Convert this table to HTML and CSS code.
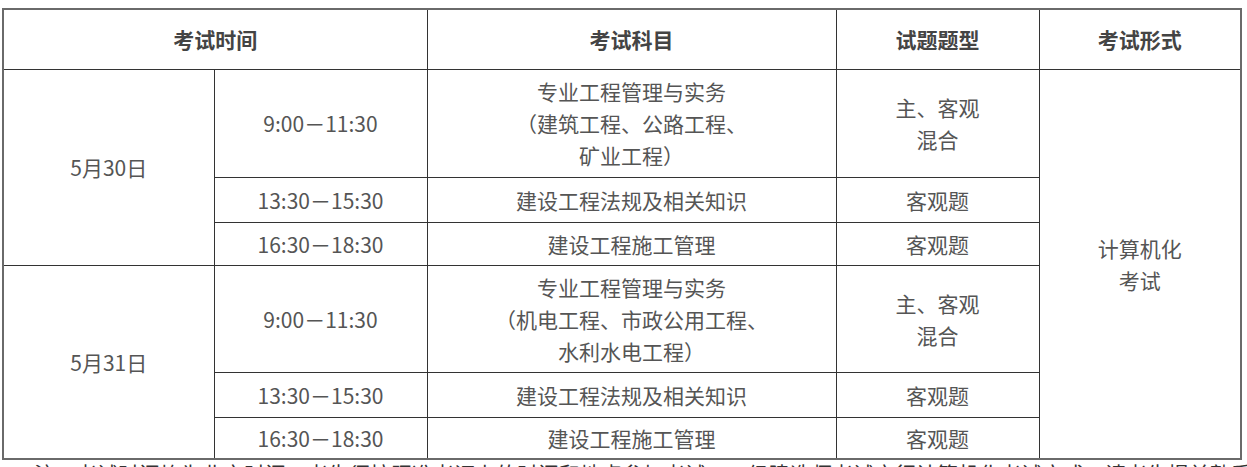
FILE: index.html
```html
<!DOCTYPE html>
<html lang="zh-CN">
<head>
<meta charset="utf-8">
<link rel="stylesheet" href="styles.css">
</head>
<body>
<div class="page">
<table class="exam">
  <colgroup>
    <col class="c1"><col class="c2"><col class="c3"><col class="c4"><col class="c5">
  </colgroup>
  <thead>
    <tr class="head">
      <th colspan="2">考试时间</th>
      <th>考试科目</th>
      <th>试题题型</th>
      <th>考试形式</th>
    </tr>
  </thead>
  <tbody>
    <tr class="tall">
      <td rowspan="3">5月30日</td>
      <td>9:00－11:30</td>
      <td>专业工程管理与实务<br>（建筑工程、公路工程、<br>矿业工程）</td>
      <td>主、客观<br>混合</td>
      <td rowspan="6">计算机化<br>考试</td>
    </tr>
    <tr class="short">
      <td>13:30－15:30</td>
      <td>建设工程法规及相关知识</td>
      <td>客观题</td>
    </tr>
    <tr class="short2">
      <td>16:30－18:30</td>
      <td>建设工程施工管理</td>
      <td>客观题</td>
    </tr>
    <tr class="tall2">
      <td rowspan="3">5月31日</td>
      <td>9:00－11:30</td>
      <td>专业工程管理与实务<br>（机电工程、市政公用工程、<br>水利水电工程）</td>
      <td>主、客观<br>混合</td>
    </tr>
    <tr class="short">
      <td>13:30－15:30</td>
      <td>建设工程法规及相关知识</td>
      <td>客观题</td>
    </tr>
    <tr class="short3">
      <td>16:30－18:30</td>
      <td>建设工程施工管理</td>
      <td>客观题</td>
    </tr>
  </tbody>
</table>
<p class="note">注：考试时间均为北京时间，考生须按照准考证上的时间和地点参加考试，一级建造师考试实行计算机化考试方式，请考生提前熟悉考试系统。</p>
</div>
</body>
</html>
```

FILE: styles.css
```css
html, body {
  margin: 0;
  padding: 0;
  background: #ffffff;
}
.page {
  padding: 8px 0 0 2px;
  height: 459px;
  overflow: hidden;
  font-family: "Noto Sans CJK SC", "Noto Sans", sans-serif;
}
.exam {
  border-collapse: collapse;
  table-layout: fixed;
  width: 1238px;
  border: 2px solid #6a6a6a;
  color: #555;
  font-size: 21px;
}
.c1 { width: 211px; }
.c2 { width: 213px; }
.c3 { width: 409px; }
.c4 { width: 203px; }
.c5 { width: 202px; }
.exam th, .exam td {
  border: 1px solid #333;
  text-align: center;
  vertical-align: middle;
  padding: 0;
  line-height: 32px;
  font-weight: normal;
}
.exam th {
  font-weight: bold;
  color: #444;
}
.head { height: 60px; }
.tall { height: 108px; }
.tall2 { height: 107px; }
.short { height: 45px; }
.short2 { height: 43px; }
.short3 { height: 42px; }
.note {
  margin: 3px 0 0 0;
  padding-left: 32px;
  font-size: 21px;
  line-height: 21px;
  color: #333;
  white-space: nowrap;
}
```
